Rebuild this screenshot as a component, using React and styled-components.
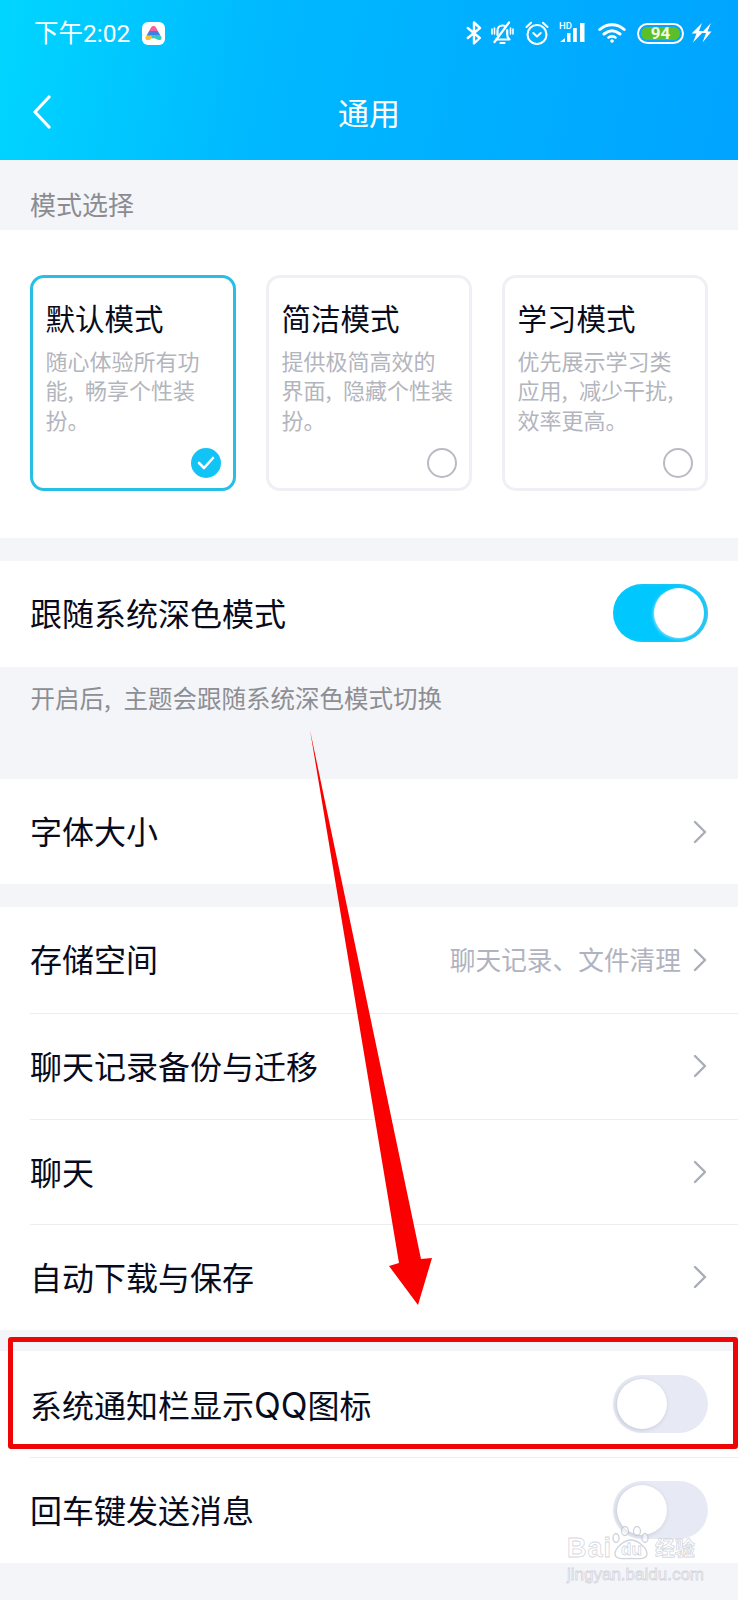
import React from 'react'
import styled, { createGlobalStyle } from 'styled-components'

const GlobalStyle = createGlobalStyle`
    html, body {
        margin: 0;
        padding: 0;
        background: #f4f5f9;
    }
    * {
        box-sizing: border-box;
    }
`

const modes = [
    { title: '默认模式', desc: '随心体验所有功能,畅享个性装扮。', active: true },
    { title: '简洁模式', desc: '提供极简高效的界面,隐藏个性装扮。' },
    { title: '学习模式', desc: '优先展示学习类应用,减少干扰,效率更高。' },
]

const storageRows = [
    { label: '存储空间', hint: '聊天记录、文件清理' },
    { label: '聊天记录备份与迁移' },
    { label: '聊天' },
    { label: '自动下载与保存' },
]

function Prose({ text }) {
    const parts = text.split(',')
    return parts.map((part, i) => (
        <React.Fragment key={i}>
            {part}
            {i < parts.length - 1 && <Comma>,</Comma>}
        </React.Fragment>
    ))
}

function Chevron() {
    return (
        <ChevronIcon viewBox="0 0 14 24" fill="none">
            <path d="M2 2l10 10L2 22" stroke="#a9adb8" strokeWidth="2.4" strokeLinecap="round" strokeLinejoin="round" />
        </ChevronIcon>
    )
}

function StatusIcons() {
    return (
        <StatusRight>
            <BluetoothIcon width="16" height="24" viewBox="0 0 16 24" fill="none" stroke="#fff" strokeWidth="2.4" strokeLinejoin="round" strokeLinecap="round">
                <path d="M1.8 7l12 10L8 22.500v-21L14 7 1.800 17" />
            </BluetoothIcon>
            <svg width="25" height="24" viewBox="0 0 25 24" fill="none" stroke="#fff" strokeWidth="2.200" strokeLinecap="round" strokeLinejoin="round">
                <path d="M6 18.500h13.500c-1.500-1.500-2.300-3-2.300-5V9" />
                <path d="M7.500 14V9.500c0-2.800 2-5 5-5 1.200 0 2.300.4 3.200 1" />
                <path d="M10.500 22h4M4.500 21L19 1.500" />
                <path d="M2 8v5M4.500 7v6M23 8v5M20.500 7v6" strokeWidth="1.600" />
            </svg>
            <svg width="24" height="24" viewBox="0 0 24 24" fill="none" stroke="#fff" strokeWidth="2.100" strokeLinecap="round" strokeLinejoin="round">
                <circle cx="12" cy="13.500" r="9.500" />
                <path d="M8.300 12l3.700 3.500 3.700-3.500M1.500 6L6 1.800M22.500 6L18 1.800" />
            </svg>
            <SignalIcon width="29" height="22" viewBox="0 0 29 22" fill="#fff">
                <SignalLabel x="0" y="7">HD</SignalLabel>
                <path d="M1 20l5-4v4z" />
                <rect x="8" y="11" width="3.500" height="9" />
                <rect x="14" y="6" width="3.800" height="14" />
                <rect x="21" y="1" width="4.500" height="19" />
            </SignalIcon>
            <svg width="28" height="20" viewBox="0 0 28 20" fill="none" stroke="#fff" strokeWidth="3" strokeLinecap="round">
                <path d="M1.800 6.500C9 0 19 0 26.200 6.500M6 11c5-4 11-4 16 0" />
                <path d="M10.500 14.500c2.200-1.500 4.800-1.500 7 0" strokeWidth="2.600" />
                <circle cx="14" cy="18" r="1.500" fill="#fff" strokeWidth="0.500" />
            </svg>
            <Battery><BatteryFill>94</BatteryFill></Battery>
            <svg width="21" height="20" viewBox="0 0 21 20" fill="#fff">
                <path d="M11 0L0.500 10.500h5L2 19.500l11-11.500H8zM20 0L10.500 10h4.500l-3.500 9.500 9-11h-4z" />
            </svg>
        </StatusRight>
    )
}

export default function App() {
    return (
        <Page>
            <GlobalStyle />
            <Header>
                <StatusBar>
                    <StatusLeft>
                        <Clock>下午2:02</Clock>
                        <AppBadge>
                            <svg width="19" height="16" viewBox="0 0 19 16">
                                <path d="M9.500 1c1.200 0 2 .7 2.600 1.700l1.800 3.300H5.100l1.800-3.300C7.500 1.700 8.300 1 9.500 1z" fill="#f2619c" />
                                <path d="M5.100 6h8.800l2.600 4.700H2.500z" fill="#3f7fe8" />
                                <path d="M2.500 10.700h5c.8 2.500-1 4.500-4 4.300-2.500-.2-2.800-2.400-1-4.300z" fill="#f6c233" />
                                <path d="M7.500 10.700h9c1.800 1.900 1.500 4.100-1 4.300-2 .1-3.500-1.800-5.500-1.800-1 0-1.800.5-2.500 0z" fill="#35c9c0" />
                            </svg>
                        </AppBadge>
                    </StatusLeft>
                    <StatusIcons />
                </StatusBar>
                <NavBar>
                    <BackIcon viewBox="0 0 18 34" fill="none">
                        <path d="M16 2L2 17l14 15" stroke="#fff" strokeWidth="3.200" strokeLinecap="round" strokeLinejoin="round" />
                    </BackIcon>
                    <NavTitle>通用</NavTitle>
                </NavBar>
            </Header>

            <SectionLabel>模式选择</SectionLabel>
            <ModePanel>
                {modes.map(mode => (
                    <ModeCard key={mode.title} $active={mode.active}>
                        <ModeTitle>{mode.title}</ModeTitle>
                        <ModeDesc><Prose text={mode.desc} /></ModeDesc>
                        <ModeMark $active={mode.active}>
                            {mode.active && (
                                <svg width="20" height="16" viewBox="0 0 20 16" fill="none">
                                    <path d="M3 8l5 5 9-10" stroke="#fff" strokeWidth="2.600" strokeLinecap="round" strokeLinejoin="round" />
                                </svg>
                            )}
                        </ModeMark>
                    </ModeCard>
                ))}
            </ModePanel>

            <Group $gap={23}>
                <Row>
                    <RowLabel $lift={4}>跟随系统深色模式</RowLabel>
                    <Switch $on><Knob $on /></Switch>
                </Row>
            </Group>
            <Note><Prose text="开启后,主题会跟随系统深色模式切换" /></Note>

            <Group>
                <Row>
                    <RowLabel $lift={4}>字体大小</RowLabel>
                    <Chevron />
                </Row>
            </Group>

            <Group $gap={23}>
                {storageRows.map((row, i) => (
                    <Row key={row.label} $divider={i > 0}>
                        <RowLabel $lift={i === 0 ? 4 : 2}>{row.label}</RowLabel>
                        <RowEnd>
                            {row.hint && <RowHint>{row.hint}</RowHint>}
                            <Chevron />
                        </RowEnd>
                    </Row>
                ))}
            </Group>

            <Group $gap={21}>
                <Row>
                    <RowLabel $lift={-1}>系统通知栏显示<Latin>QQ</Latin>图标</RowLabel>
                    <Switch><Knob /></Switch>
                </Row>
                <Row $divider>
                    <RowLabel $lift={2}>回车键发送消息</RowLabel>
                    <Switch><Knob /></Switch>
                </Row>
            </Group>

            <RedBox />
            <ArrowLayer viewBox="0 0 738 1600">
                <polygon points="310,730 421,1259 432,1258 418,1305 389,1266 399,1263" fill="#fb0000" />
            </ArrowLayer>
            <Watermark>
                <WatermarkBrand>
                    <WatermarkBai>Bai</WatermarkBai>
                    <PawBlock>
                        <svg width="38" height="34" viewBox="0 0 38 34" fill="rgba(255,255,255,.55)" stroke="rgba(190,193,204,.7)" strokeWidth="1.300">
                            <ellipse cx="4" cy="12" rx="3" ry="4.500" />
                            <ellipse cx="13" cy="5" rx="3.500" ry="4.500" />
                            <ellipse cx="25" cy="5" rx="3.500" ry="4.500" />
                            <ellipse cx="33" cy="12" rx="3" ry="4.500" />
                            <path d="M19 14c7 0 16 8 16 14 0 5-7 5-16 4.500C10 33 3 33 3 28c0-6 9-14 16-14z" />
                        </svg>
                        <PawText>du</PawText>
                    </PawBlock>
                    <WatermarkCn>经验</WatermarkCn>
                </WatermarkBrand>
                <WatermarkUrl>jingyan.baidu.com</WatermarkUrl>
            </Watermark>
        </Page>
    )
}

const Page = styled.div`
    position: relative;
    width: 738px;
    height: 1600px;
    overflow: hidden;
    background: #f4f5f9;
    font-family: "Noto Sans CJK SC", "Noto Sans", sans-serif;
    color: #070b1c;
`
const Header = styled.header`
    height: 160px;
    background: linear-gradient(100deg, #00d6ff 0%, #00b9ff 35%, #00a4ff 100%);
    color: #fff;
`
const StatusBar = styled.div`
    height: 66px;
    display: flex;
    align-items: center;
    justify-content: space-between;
    padding: 0 26px 0 34px;
`
const StatusLeft = styled.div`
    display: flex;
    align-items: center;
    gap: 12px;
`
const Clock = styled.span`
    font-family: Roboto, "Noto Sans CJK SC", sans-serif;
    font-size: 24.500px;
    line-height: 30px;
    position: relative;
    top: 1px;
`
const AppBadge = styled.span`
    width: 23px;
    height: 23px;
    border-radius: 6px;
    background: #fff;
    display: flex;
    align-items: center;
    justify-content: center;
`
const StatusRight = styled.div`
    display: flex;
    align-items: center;
    gap: 10px;
`
const BluetoothIcon = styled.svg`
    margin-right: -2px;
`
const SignalIcon = styled.svg`
    overflow: visible;
`
const SignalLabel = styled.text`
    font-family: Roboto, sans-serif;
    font-size: 9.500px;
    font-weight: 500;
`
const Battery = styled.div`
    width: 47px;
    height: 21px;
    border: 2px solid #fff;
    border-radius: 11px;
    padding: 2px;
    margin-left: 1px;
    margin-right: -3px;
    display: flex;
`
const BatteryFill = styled.div`
    flex: 1;
    background: #5cbf2a;
    border-radius: 7px;
    font-family: Roboto, sans-serif;
    font-size: 17px;
    font-weight: 700;
    line-height: 13px;
    text-align: center;
    color: #eefbe4;
`
const NavBar = styled.div`
    height: 94px;
    display: flex;
    align-items: flex-start;
    justify-content: center;
    position: relative;
`
const BackIcon = styled.svg`
    position: absolute;
    left: 33px;
    top: 29px;
    width: 18px;
    height: 34px;
`
const NavTitle = styled.h1`
    margin: 24px 0 0;
    font-size: 31px;
    line-height: 44px;
    font-weight: 400;
`
const SectionLabel = styled.div`
    height: 70px;
    padding: 25px 0 0 30px;
    font-size: 26px;
    line-height: 38px;
    color: #8b8c91;
`
const ModePanel = styled.section`
    height: 308px;
    background: #fff;
    padding: 45px 31px 0 30px;
    display: grid;
    grid-template-columns: repeat(3, 206px);
    grid-template-rows: 216px;
    column-gap: 30px;
`
const ModeCard = styled.div`
    display: flex;
    flex-direction: column;
    padding: 18.500px 12px 10.500px 12.500px;
    border: 3px solid ${p => (p.$active ? '#27bfe6' : '#eff0f5')};
    border-radius: 14px;
    background: #fff;
`
const ModeTitle = styled.div`
    font-size: 29.500px;
    line-height: 40px;
`
const ModeDesc = styled.div`
    margin-top: 9px;
    font-size: 22px;
    line-height: 29.500px;
    color: #b3b5bd;
`
const ModeMark = styled.div`
    margin-top: auto;
    align-self: flex-end;
    flex: none;
    width: 30px;
    height: 30px;
    border-radius: 50%;
    display: flex;
    align-items: center;
    justify-content: center;
    background: ${p => (p.$active ? '#12c3f5' : 'transparent')};
    border: ${p => (p.$active ? 'none' : '2px solid #b9bbc2')};
`
const Comma = styled.span`
    display: inline-block;
    width: .8em;
`
const Group = styled.section`
    margin-top: ${p => p.$gap || 0}px;
    background: #fff;
`
const Row = styled.div`
    position: relative;
    height: 105.700px;
    padding: 0 30px 0 30px;
    display: flex;
    align-items: center;
    justify-content: space-between;

    ${p => p.$divider && `
        &::before {
            content: '';
            position: absolute;
            left: 30px;
            right: 0;
            top: 0;
            height: 1px;
            background: #ebedf1;
        }
    `}
`
const RowLabel = styled.span`
    font-size: 32px;
    line-height: 44px;
    margin-bottom: ${p => p.$lift}px;
`
const Latin = styled.span`
    font-family: Inter, "Noto Sans", sans-serif;
    font-size: 35px;
    line-height: 30px;
`
const RowEnd = styled.span`
    display: flex;
    align-items: center;
    gap: 12px;
`
const RowHint = styled.span`
    font-size: 25.700px;
    color: #b0b3bf;
    margin-bottom: 4px;
`
const ChevronIcon = styled.svg`
    width: 14px;
    height: 24px;
    margin-right: 1px;
    display: block;
`
const Switch = styled.div`
    width: 95px;
    height: 58px;
    border-radius: 29px;
    padding: 4px;
    margin-bottom: ${p => (p.$on ? '2px' : '0')};
    display: flex;
    justify-content: ${p => (p.$on ? 'flex-end' : 'flex-start')};
    background: ${p => (p.$on ? '#00c8ff' : '#e7eaf4')};
    box-shadow: ${p => (p.$on ? 'inset -2px 0 3px rgba(120, 190, 215, .6)' : 'none')};
`
const Knob = styled.div`
    width: 50px;
    height: 50px;
    border-radius: 50%;
    background: #fff;
    box-shadow: ${p => (p.$on ? '-1px 1px 3px rgba(150, 225, 250, .9)' : '-1px 1px 4px rgba(110, 120, 150, .3)')};
`
const Note = styled.div`
    height: 112px;
    padding: 13px 0 0 30.500px;
    font-size: 24.500px;
    line-height: 36px;
    color: #8d8e93;
`
const RedBox = styled.div`
    position: absolute;
    left: 8px;
    top: 1337px;
    width: 729.500px;
    height: 112px;
    border: 5px solid #ee0505;
    border-radius: 3px;
`
const ArrowLayer = styled.svg`
    position: absolute;
    left: 0;
    top: 0;
    width: 738px;
    height: 1600px;
    pointer-events: none;
`
const Watermark = styled.div`
    position: absolute;
    left: 567px;
    top: 1526px;
    width: 132px;
    display: flex;
    flex-direction: column;
    color: rgba(255, 255, 255, .5);
    -webkit-text-stroke: .8px rgba(190, 193, 204, .65);
`
const WatermarkBrand = styled.div`
    display: flex;
    align-items: flex-end;
    height: 34px;
`
const WatermarkBai = styled.span`
    font-family: "Liberation Sans", sans-serif;
    font-size: 27px;
    font-weight: 700;
    line-height: 24px;
    letter-spacing: 1px;
    width: 45px;
`
const PawBlock = styled.div`
    position: relative;
    width: 38px;
    height: 34px;
    margin-right: 5px;
`
const PawText = styled.span`
    position: absolute;
    left: 9px;
    bottom: 0;
    font-family: "Liberation Sans", sans-serif;
    font-size: 17px;
    font-weight: 700;
    line-height: 20px;
`
const WatermarkCn = styled.span`
    font-size: 20px;
    font-weight: 700;
    line-height: 24px;
    white-space: nowrap;
`
const WatermarkUrl = styled.div`
    margin-top: 5px;
    font-family: "Liberation Sans", sans-serif;
    font-size: 17px;
    line-height: 20px;
    white-space: nowrap;
`
